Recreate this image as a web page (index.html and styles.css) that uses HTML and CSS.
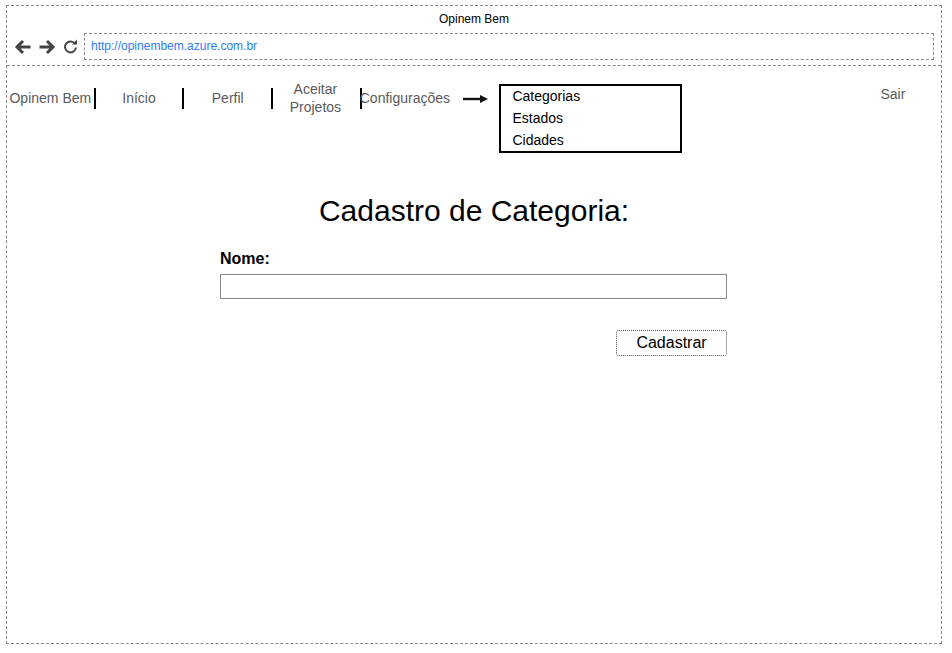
FILE: index.html
```html
<!DOCTYPE html>
<html lang="pt">
<head>
<meta charset="utf-8">
<title>Opinem Bem</title>
<link rel="stylesheet" href="styles.css">
</head>
<body>
<div class="frame">
  <header class="browser">
    <div class="title">Opinem Bem</div>
    <div class="toolbar">
      <div class="icons">
        <svg class="ico" width="18" height="18" viewBox="0 0 18 18"><path d="M16.5 9H3M9 3L3 9l6 6" fill="none" stroke="#444" stroke-width="3"/></svg>
        <svg class="ico" width="18" height="18" viewBox="0 0 18 18"><path d="M1.5 9H15M9 3l6 6-6 6" fill="none" stroke="#444" stroke-width="3"/></svg>
        <svg class="ico reload" width="15" height="15" viewBox="0 0 15 15"><path d="M12.2 5A5.5 5.5 0 1 0 13 8.5" fill="none" stroke="#444" stroke-width="2"/><path d="M9 5.5h5v-5z" fill="#444"/></svg>
      </div>
      <div class="address">http://opinembem.azure.com.br</div>
    </div>
  </header>
  <nav class="nav">
    <div class="cell">Opinem Bem</div>
    <div class="sep"></div>
    <div class="cell">Início</div>
    <div class="sep"></div>
    <div class="cell">Perfil</div>
    <div class="sep"></div>
    <div class="cell two">Aceitar<br>Projetos</div>
    <div class="sep"></div>
    <div class="cell cfg">Configurações</div>
    <svg class="arrow" width="25" height="10" viewBox="0 0 25 10"><path d="M0 5h18" stroke="#111" stroke-width="2.4"/><path d="M17 1l8 4-8 4z" fill="#111"/></svg>
    <ul class="menu">
      <li>Categorias</li>
      <li>Estados</li>
      <li>Cidades</li>
    </ul>
    <div class="sair">Sair</div>
  </nav>
  <main class="content">
    <h1 class="heading">Cadastro de Categoria:</h1>
    <form class="form">
      <label class="label" for="nome">Nome:</label>
      <input class="input" id="nome" type="text">
      <div class="actions"><button class="btn" type="button">Cadastrar</button></div>
    </form>
  </main>
</div>
</body>
</html>
```

FILE: styles.css
```css
html, body {
  margin: 0;
  padding: 0;
  background: #fff;
  font-family: "Liberation Sans", Arial, sans-serif;
}
.frame {
  box-sizing: border-box;
  margin: 5px 0 0 6px;
  width: 936px;
  height: 639px;
  border: 1px dashed #8a8a8a;
}
.browser {
  box-sizing: border-box;
  height: 60px;
  border-bottom: 1px dashed #8a8a8a;
}
.title {
  height: 27px;
  line-height: 26px;
  text-align: center;
  font-size: 12px;
  color: #000;
}
.toolbar {
  display: flex;
  align-items: center;
  padding: 0 7px 0 7px;
}
.icons {
  display: flex;
  align-items: center;
  gap: 6px;
  width: 70px;
}
.ico { display: block; }
.reload { margin-left: 1px; }
.address {
  box-sizing: border-box;
  flex: 1;
  height: 27px;
  border: 1px dashed #8a8a8a;
  font-size: 12px;
  line-height: 25px;
  padding-left: 6px;
  color: #2f7cf0;
}
.nav {
  display: flex;
  align-items: flex-start;
  height: 86px;
  padding-top: 18px;
  box-sizing: border-box;
  font-size: 14px;
  color: #5a5a5a;
}
.cell {
  width: 86.7px;
  height: 20px;
  margin-top: 4px;
  line-height: 20px;
  text-align: center;
  white-space: nowrap;
  flex: none;
}
.cell.two {
  line-height: 18px;
  margin-top: -4px;
  height: 36px;
  margin-left: -1px;
  margin-right: 1px;
}
.cell.cfg {
  margin-left: -2px;
}
.sep {
  width: 2px;
  height: 21px;
  margin-top: 4px;
  background: #000;
  flex: none;
}
.arrow {
  margin: 10px 0 0 17px;
  flex: none;
}
.menu {
  list-style: none;
  margin: 0 0 0 11px;
  padding: 0 0 0 11px;
  box-sizing: border-box;
  width: 183px;
  height: 69px;
  border: 2px solid #000;
  color: #000;
  flex: none;
}
.menu li {
  height: 22px;
  line-height: 20px;
}
.sair {
  margin-left: 198px;
  margin-top: 0;
  line-height: 20px;
}
.content {
  padding-top: 41px;
}
.heading {
  margin: 0;
  text-align: center;
  font-size: 30px;
  font-weight: normal;
  line-height: 36px;
  color: #000;
}
.form {
  width: 507px;
  margin: 20px 0 0 213px;
  display: flex;
  flex-direction: column;
}
.label {
  font-weight: bold;
  font-size: 16px;
  line-height: 20px;
  color: #000;
}
.input {
  box-sizing: border-box;
  margin: 5px 0 0 0;
  height: 25px;
  width: 507px;
  border: 1px solid #8a8a8a;
  padding: 0;
  outline: none;
}
.actions {
  display: flex;
  justify-content: flex-end;
  margin-top: 31px;
}
.btn {
  box-sizing: border-box;
  width: 111px;
  height: 26px;
  background: #fff;
  border: 1px dotted #555;
  border-radius: 3px;
  font-family: "Liberation Sans", Arial, sans-serif;
  font-size: 16px;
  color: #000;
  padding: 0;
}
```
